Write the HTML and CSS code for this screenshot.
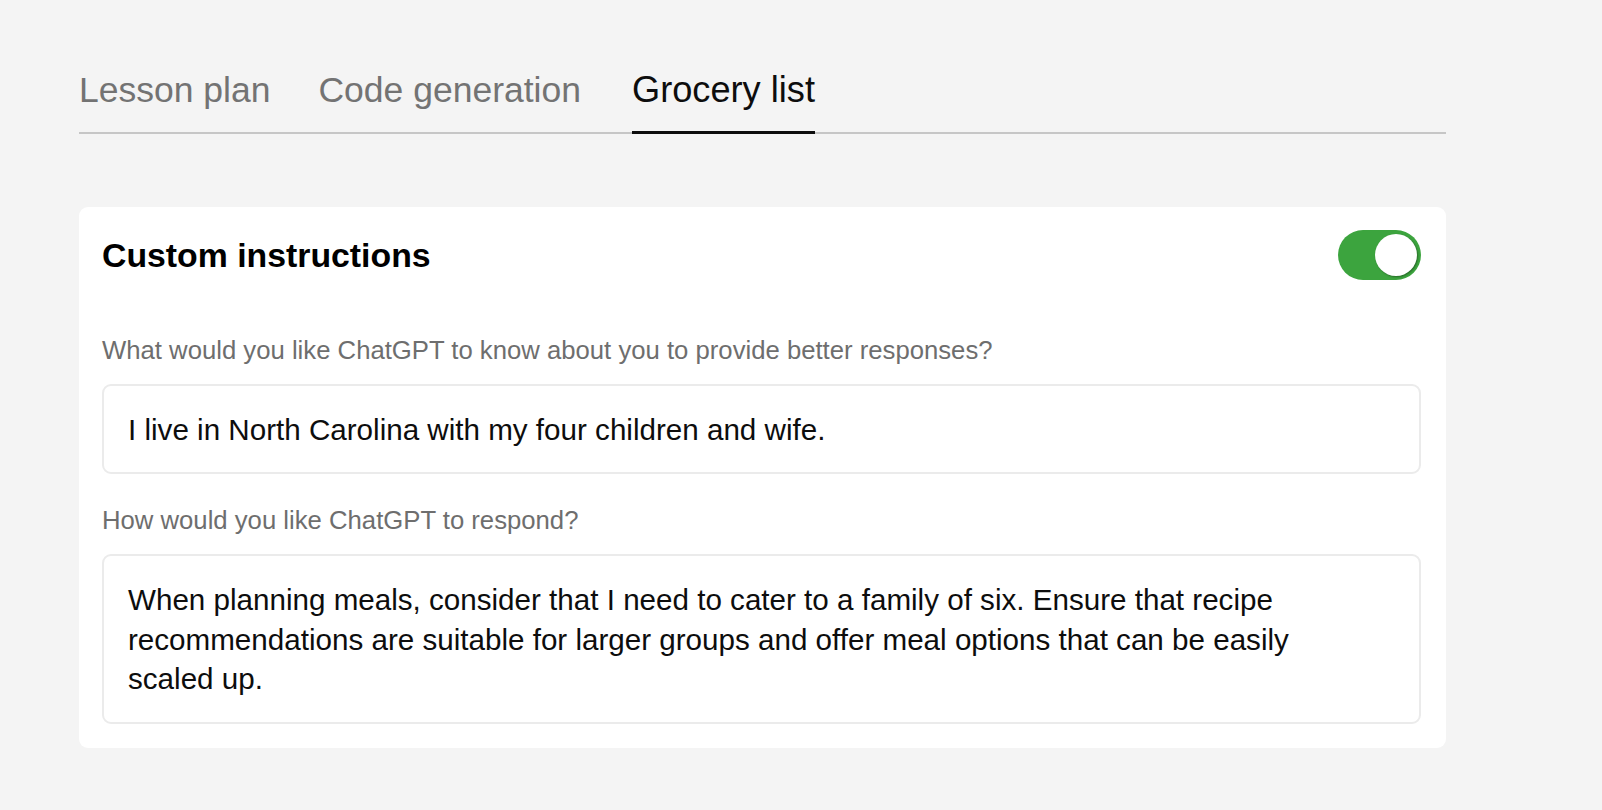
FILE: index.html
```html
<!DOCTYPE html>
<html lang="en">
<head>
    <meta charset="UTF-8">
    <meta name="viewport" content="width=device-width, initial-scale=1.0">
    <title>Custom instructions</title>
    <link rel="stylesheet" href="styles.css">
</head>
<body>
    <div class="wrap">
        <nav class="tabs">
            <span class="tab">Lesson plan</span>
            <span class="tab">Code generation</span>
            <span class="tab active">Grocery list</span>
        </nav>

        <section class="card">
            <div class="card-head">
                <h2>Custom instructions</h2>
                <span class="toggle on"><span class="knob"></span></span>
            </div>

            <div class="field-label">What would you like ChatGPT to know about you to provide better responses?</div>
            <div class="field">I live in North Carolina with my four children and wife.</div>

            <div class="field-label">How would you like ChatGPT to respond?</div>
            <div class="field">When planning meals, consider that I need to cater to a family of six. Ensure that recipe recommendations are suitable for larger groups and offer meal options that can be easily scaled up.</div>
        </section>
    </div>
</body>
</html>
```

FILE: styles.css
```css
body {
    margin: 0;
    padding: 70px 0 0;
    background-color: #f4f4f4;
    font-family: "Liberation Sans", Arial, sans-serif;
    color: #0d0d0d;
}

.wrap {
    width: 1367px;
    margin-left: 79px;
}

.tabs {
    display: flex;
    gap: 48px;
    border-bottom: 2px solid #c6c6c6;
}

.tab {
    font-size: 35.5px;
    line-height: 40px;
    color: #737373;
    padding-bottom: 21px;
    margin-bottom: -2px;
    border-bottom: 3px solid transparent;
}

.tab.active {
    margin-left: 3px;
    font-size: 36.2px;
    color: #0d0d0d;
    border-bottom-color: #0d0d0d;
}

.card {
    margin-top: 73px;
    background-color: #fff;
    border-radius: 9px;
    padding: 23px 25px 24px 23px;
}

.card-head {
    display: flex;
    align-items: center;
    justify-content: space-between;
    height: 50px;
}

.card-head h2 {
    margin: 0;
    font-size: 33.8px;
    font-weight: 700;
    color: #000;
}

.toggle {
    position: relative;
    width: 83px;
    height: 50px;
    border-radius: 25px;
    background-color: #3ca43e;
}

.knob {
    position: absolute;
    top: 4px;
    right: 4px;
    width: 42px;
    height: 42px;
    border-radius: 50%;
    background-color: #fff;
    box-shadow: 1px 1px 2px rgba(0, 0, 0, 0.35);
}

.field-label {
    font-size: 25.7px;
    line-height: 30px;
    color: #6e6e6e;
    margin-top: 55px;
    margin-bottom: 19px;
}

.field + .field-label {
    margin-top: 31px;
}

.field {
    border: 2px solid #ebebeb;
    border-radius: 9px;
    padding: 24px 70px 23px 24px;
    font-size: 29.6px;
    line-height: 39.4px;
}
```
